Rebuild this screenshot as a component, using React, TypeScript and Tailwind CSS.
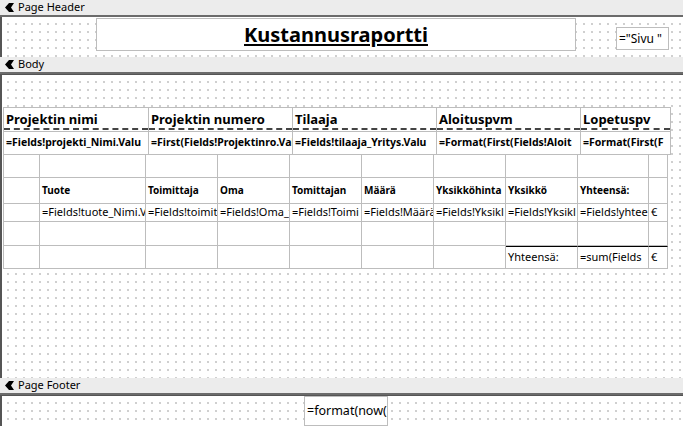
import React from "react";

const dots = "bg-[radial-gradient(circle,#666_0.5px,transparent_0.8px)] bg-[length:8px_8px] bg-[position:2px_3px]";

function Bar({ label }: { label: string }) {
  return (
    <div className="h-[17px] bg-[#ececec] border-b-2 border-[#6b6b6b] flex items-center pl-[5px] gap-[3px] text-[11px] text-black font-['Liberation_Sans',Arial,sans-serif]">
      <svg width="10" height="9" viewBox="0 0 10 9"><path d="M9 0 L4 0 L0 4.5 L4 9 L9 9 L6 4.5 Z" fill="#000" /></svg>
      <span>{label}</span>
    </div>
  );
}

const bold = "font-['DejaVu_Sans_Condensed','DejaVu_Sans',sans-serif] font-bold";
const top = [145, 144, 144, 144, 90];
const sub = [36, 106, 72, 72, 72, 72, 72, 72, 71, 19];

function Cell({ w, h, children, cls = "" }: { w: number; h: number; children?: React.ReactNode; cls?: string }) {
  return (
    <div className={`relative border-r border-b border-[#bdbdbd] overflow-hidden whitespace-nowrap flex items-center shrink-0 ${cls}`} style={{ width: w, height: h }}>
      {children}
    </div>
  );
}

export default function App() {
  const hdr = ["Projektin nimi", "Projektin numero", "Tilaaja", "Aloituspvm", "Lopetuspv"];
  const val = ["=Fields!projekti_Nimi.Valu", "=First(Fields!Projektinro.Value", "=Fields!tilaaja_Yritys.Valu", "=Format(First(Fields!Aloit", "=Format(First(F"];
  const sh = ["", "Tuote", "Toimittaja", "Oma", "Tomittajan", "Määrä", "Yksikköhinta", "Yksikkö", "Yhteensä:", ""];
  const sv = ["", "=Fields!tuote_Nimi.V:", "=Fields!toimit", "=Fields!Oma_t", "=Fields!Toimi", "=Fields!Määrä", "=Fields!Yksikl", "=Fields!Yksikl", "=Fields!yhteer", "€"];
  return (
    <div className="w-[683px] h-[426px] bg-white overflow-hidden flex flex-col">
      <Bar label="Page Header" />
      <div className={`h-[40px] border-l-2 border-[#555] ${dots} flex items-start pt-[1px]`}>
        <div className="ml-[94px] w-[480px] h-[33px] bg-white border border-[#bdbdbd] flex items-center justify-center">
          <span className={`text-[20px] underline underline-offset-2 ${bold}`}>Kustannusraportti</span>
        </div>
        <div className="ml-[40px] mt-[9px] w-[53px] h-[23px] bg-white border border-[#bdbdbd] flex items-center pl-[2px] text-[12px] overflow-hidden whitespace-nowrap font-['Liberation_Sans',Arial,sans-serif]">="Sivu "</div>
      </div>
      <Bar label="Body" />
      <div className={`h-[305px] border-l-2 border-t border-[#555] ${dots} pt-[32px] pl-[1px]`}>
        <div className="flex flex-col w-fit bg-white border-t border-l border-[#bdbdbd]">
          <div className="flex">
            {top.map((w, i) => (
              <Cell key={i} w={w} h={24} cls="pl-[2px] text-[13px]">
                <span className={bold}>{hdr[i]}</span>
                <div className="absolute left-0 right-0 bottom-[1px] border-b-2 border-dashed border-[#444]" />
              </Cell>
            ))}
          </div>
          <div className="flex">
            {top.map((w, i) => (
              <Cell key={i} w={w} h={23} cls="pl-[2px] text-[10.5px]">
                <span className={bold}>{val[i]}</span>
              </Cell>
            ))}
          </div>
          <div className="flex">{sub.map((w, i) => <Cell key={i} w={w} h={23} />)}</div>
          <div className="flex">
            {sub.map((w, i) => (
              <Cell key={i} w={w} h={26} cls="pl-[2px] text-[10px]">
                <span className={bold}>{sh[i]}</span>
              </Cell>
            ))}
          </div>
          <div className="flex">
            {sub.map((w, i) => (
              <Cell key={i} w={w} h={18} cls="pl-[2px] text-[11px] font-['Liberation_Serif',serif]">
                <span>{sv[i]}</span>
              </Cell>
            ))}
          </div>
          <div className="flex">{sub.map((w, i) => <Cell key={i} w={w} h={24} />)}</div>
          <div className="flex">
            {sub.map((w, i) => (
              <Cell key={i} w={w} h={23} cls={`pl-[2px] text-[11px] font-['DejaVu_Sans',sans-serif] ${i >= 7 ? "border-t border-t-black" : ""}`}>
                <span>{i === 7 ? "Yhteensä:" : i === 8 ? "=sum(Fields" : i === 9 ? "€" : ""}</span>
              </Cell>
            ))}
          </div>
        </div>
      </div>
      <Bar label="Page Footer" />
      <div className={`flex-1 border-l-2 border-t border-[#555] ${dots}`}>
        <div className="ml-[302px] w-[84px] h-[30px] bg-white border border-[#bdbdbd] flex items-center pl-[2px] text-[12.5px] overflow-hidden whitespace-nowrap font-['Liberation_Sans',Arial,sans-serif]">=format(now()</div>
      </div>
    </div>
  );
}
